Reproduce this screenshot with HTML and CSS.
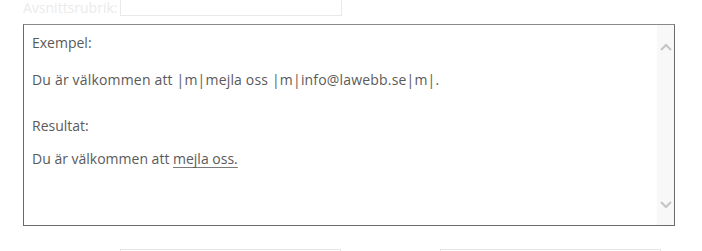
FILE: index.html
```html
<!DOCTYPE html>
<html lang="sv">
<head>
<meta charset="utf-8">
<title>Exempel</title>
<link rel="stylesheet" href="styles.css">
</head>
<body>
<div class="page">
  <div class="field-row">
    <label class="field-label">Avsnittsrubrik:</label>
    <div class="field-input"></div>
  </div>
  <div class="box">
    <div class="box-content">
      <p class="line l1">Exempel:</p>
      <p class="line l2">Du är välkommen att |m|mejla oss |m|info@lawebb.se|m|.</p>
      <p class="line l3">Resultat:</p>
      <p class="line l4">Du är välkommen att <span class="link">mejla oss.</span></p>
    </div>
    <div class="scrollbar">
      <svg class="chev" width="12" height="8" viewBox="0 0 12 8"><polyline points="1,7 6,2 11,7" fill="none" stroke="#c4c4c4" stroke-width="2"/></svg>
      <svg class="chev" width="12" height="8" viewBox="0 0 12 8"><polyline points="1,1 6,6 11,1" fill="none" stroke="#c4c4c4" stroke-width="2"/></svg>
    </div>
  </div>
  <div class="bottom-row">
    <div class="bottom-input"></div>
    <div class="bottom-input"></div>
  </div>
</div>
</body>
</html>
```
FILE: styles.css
```css
html, body {
  margin: 0;
  padding: 0;
  background: #ffffff;
  overflow: hidden;
}
body {
  font-family: "Open Sans", Lato, "Liberation Sans", sans-serif;
  font-size: 14px;
  color: #5a5a5a;
}
.page {
  padding-left: 23px;
  width: 652px;
}
.field-row {
  display: flex;
  align-items: flex-end;
  height: 16px;
  margin-bottom: 8px;
}
.field-label {
  color: #ebebeb;
  font-size: 14px;
  line-height: 16px;
  width: 97px;
  flex-shrink: 0;
  white-space: nowrap;
}
.field-input {
  width: 222px;
  height: 23px;
  border: 1px solid #e9e9e9;
  box-sizing: border-box;
  flex-shrink: 0;
}
.box {
  display: flex;
  border: 1px solid #6a6a6a;
  border-top-color: #8a8a8a;
  height: 202px;
  box-sizing: border-box;
}
.box-content {
  flex: 1;
  padding: 9px 8px 0 8px;
}
.line {
  margin: 0;
  line-height: 18px;
}
.l2 { margin-top: 19px; letter-spacing: 0.18px; }
.l3 { margin-top: 28px; }
.l4 { margin-top: 15px; }
.link {
  text-decoration: underline;
  text-decoration-color: #7a7a7a;
  text-underline-offset: 3px;
}
.scrollbar {
  width: 17px;
  background: #f8f8f8;
  display: flex;
  flex-direction: column;
  justify-content: space-between;
  align-items: center;
  padding: 18px 0 16px 0;
  box-sizing: border-box;
}
.chev {
  display: block;
}
.bottom-row {
  display: flex;
  gap: 99px;
  margin-top: 23px;
  margin-left: 97px;
}
.bottom-input {
  width: 221px;
  height: 20px;
  border: 1px solid #e6e6e6;
  box-sizing: border-box;
}
```
